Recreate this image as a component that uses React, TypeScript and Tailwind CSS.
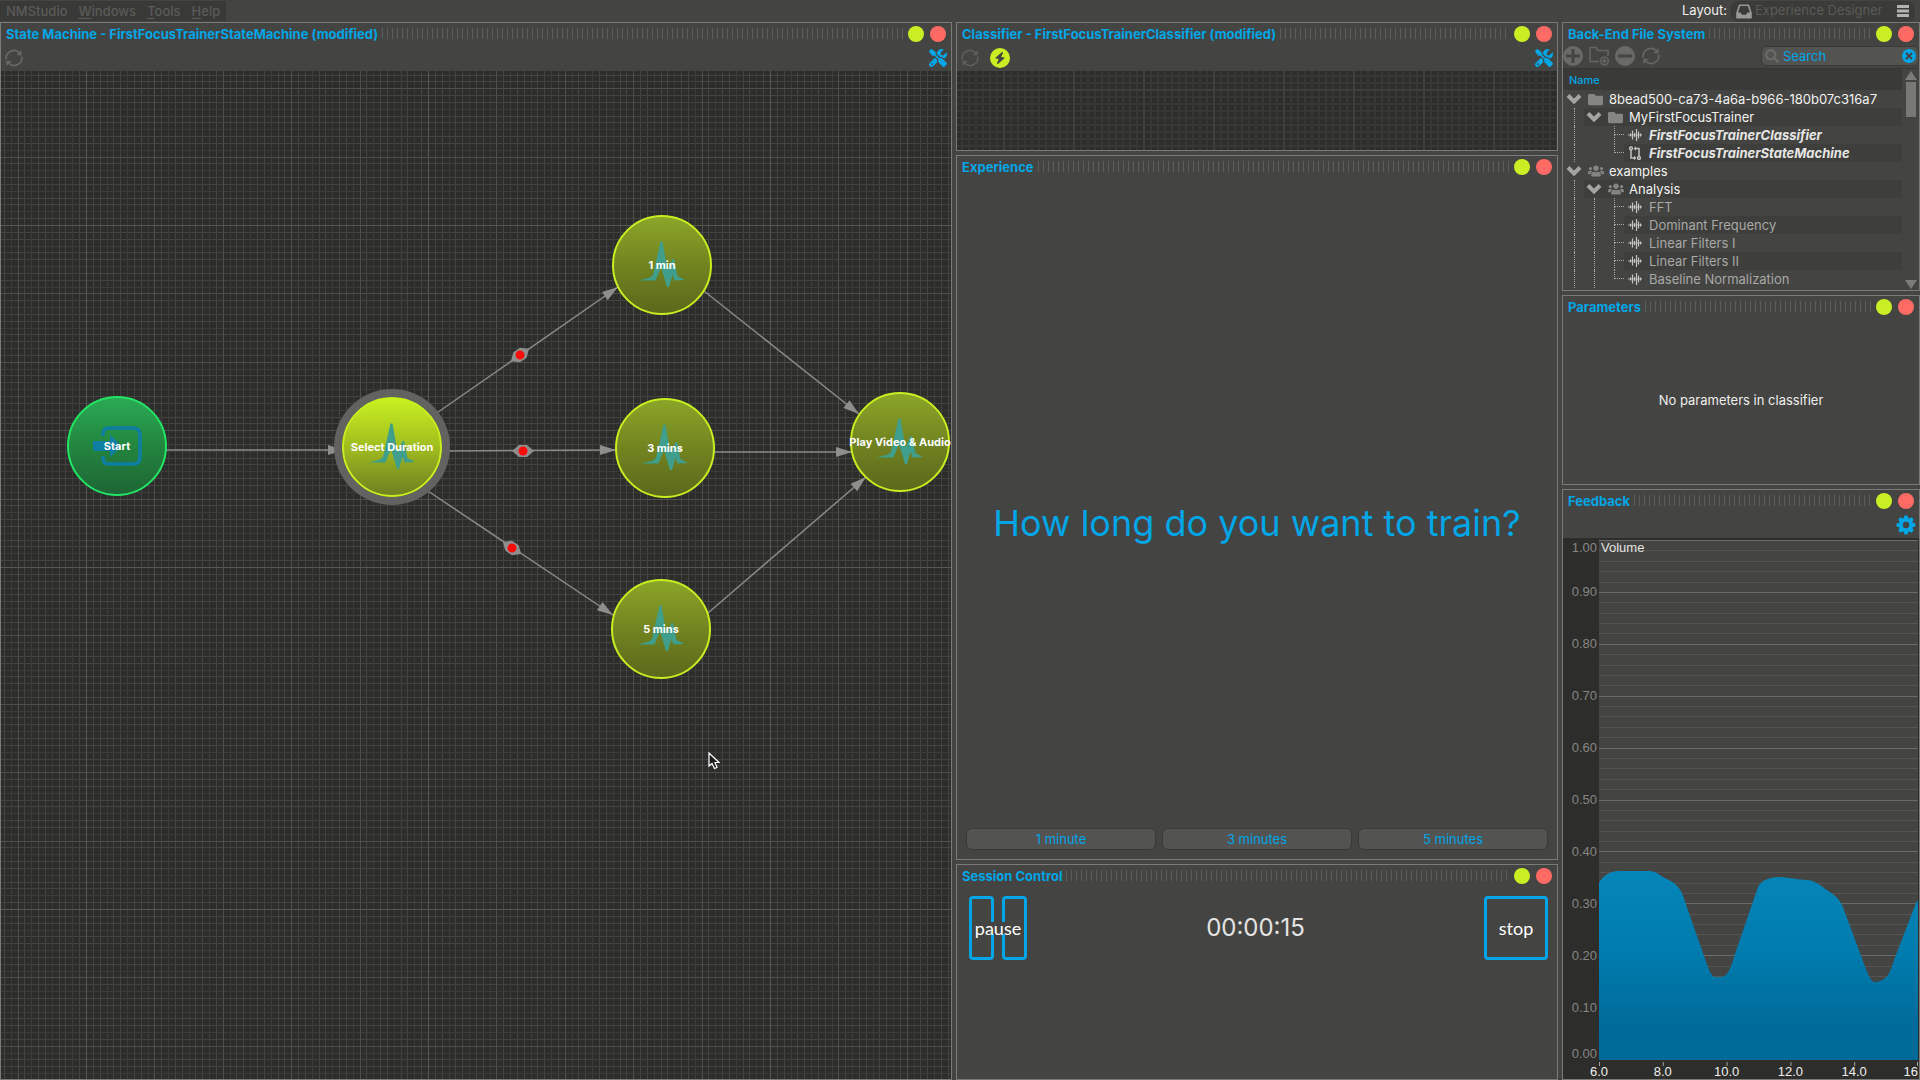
import type { ReactNode } from "react";
import { FaFolder, FaUsers, FaSearch } from "react-icons/fa";
import { FaBolt, FaScrewdriverWrench } from "react-icons/fa6";

function RefreshIcon({ className }: { className: string }) {
  return (
    <svg viewBox="0 0 18 18" className={className} fill="none" stroke="currentColor" strokeWidth="1.6" aria-hidden="true">
      <path d="M1.2 10.5A7.8 7.8 0 0 1 14.2 3.6" />
      <path d="M16.8 7.5A7.8 7.8 0 0 1 3.8 14.4" />
      <path d="M16.6 1v5.2h-5.2z" fill="currentColor" stroke="none" />
      <path d="M1.4 17v-5.2h5.2z" fill="currentColor" stroke="none" />
    </svg>
  );
}

function GearIcon() {
  return (
    <svg viewBox="-10 -10 20 20" className="size-5" aria-hidden="true">
      <circle r="5.2" fill="none" stroke="currentColor" strokeWidth="4" />
      {[0, 45, 90, 135, 180, 225, 270, 315].map((a) => (
        <path key={a} d="M-2.6 -6L-1.5 -9.4H1.5L2.6 -6Z" fill="currentColor" transform={`rotate(${a})`} />
      ))}
    </svg>
  );
}

function TrayIcon() {
  return (
    <svg viewBox="0 0 16 15" className="h-[15px] w-4 shrink-0 text-[#9a9a98]" aria-hidden="true">
      <path d="M3.500 1.200H12.500L15 9V13.800H1V9Z" fill="none" stroke="currentColor" strokeWidth="1.600" strokeLinejoin="round" />
      <path d="M1 8.500H4.500L6 10.800H10L11.500 8.500H15V14H1Z" fill="currentColor" />
    </svg>
  );
}

function WaveIcon() {
  return (
    <svg viewBox="0 0 14 14" className="h-3.5 w-3.5" stroke="currentColor" strokeWidth="1.2" aria-hidden="true">
      <path d="M0 7H14" strokeWidth="0.8" />
      <path d="M2.500 5.500V8.500M4.500 2.500V11.500M6.500 5V9M8.500 1V13M10.500 3.500V10.500M12.500 5.500V8.500" />
    </svg>
  );
}

function MachineIcon() {
  return (
    <svg viewBox="0 0 14 14" className="h-3.5 w-3.5" fill="none" stroke="currentColor" strokeWidth="1.5" aria-hidden="true">
      <circle cx="3" cy="2.5" r="1.4" />
      <circle cx="11" cy="12" r="1.4" />
      <path d="M3 4v8h3.5M11 10.6V2.5H7.5" />
      <path d="M6 9.8v4.4L8.4 12zM8 .3v4.4L5.6 2.5z" fill="currentColor" stroke="none" />
    </svg>
  );
}

function Panel({ title, children }: { title: string; children?: ReactNode }) {
  return (
    <section className="flex min-h-0 min-w-0 flex-col overflow-hidden border border-[#7b7b79] bg-[#444442]">
      <header className="flex h-[21px] shrink-0 items-center gap-1 pr-[5px] pl-[5px]">
        <h2 className="shrink-0 text-[13px] leading-4 font-bold text-[#00a6e6]">{title}</h2>
        <div className="h-[11px] flex-1 bg-[repeating-linear-gradient(90deg,#5d5d5b_0px,#5d5d5b_1px,transparent_1px,transparent_5px)]" />
        <div className="flex shrink-0 gap-1.5 pl-px">
          <button aria-label={`Detach ${title}`} className="size-4 rounded-full bg-[#c9ee24]" />
          <button aria-label={`Close ${title}`} className="size-4 rounded-full bg-[#ff6b64]" />
        </div>
      </header>
      {children}
    </section>
  );
}

const minorSteps = Array.from({ length: 50 }, (_, i) => Math.round((i * 342) / 50));

function MachineGrid() {
  return (
    <svg className="absolute inset-0 h-full w-full" shapeRendering="crispEdges" aria-hidden="true">
      <defs>
        <pattern id="machine-grid" x="85" y="154" width="342" height="342" patternUnits="userSpaceOnUse">
          {minorSteps.map((p, i) => (
            <g key={p} fill={i % 10 === 0 ? "none" : i % 3 === 0 ? "#3b3b39" : "#434341"}>
              <rect x={p} y="0" width="1" height="342" />
              <rect x="0" y={p} width="342" height="1" />
            </g>
          ))}
          {minorSteps.filter((_, i) => i % 10 === 0).map((p) => (
            <g key={p} fill={p === 0 ? "#575755" : "#4e4e4c"}>
              <rect x={p} y="0" width="1" height="342" />
              <rect x="0" y={p} width="342" height="1" />
            </g>
          ))}
        </pattern>
      </defs>
      <rect width="100%" height="100%" fill="url(#machine-grid)" />
    </svg>
  );
}

function ClassifierGrid() {
  return (
    <svg className="h-full w-full" shapeRendering="crispEdges" aria-hidden="true">
      <defs>
        <pattern id="classifier-grid" x="46" y="18" width="70" height="70" patternUnits="userSpaceOnUse">
          {[1, 2, 3, 4, 5, 6, 7, 8, 9].map((i) => (
            <g key={i} fill="#373735">
              <rect x={i * 7} y="0" width="2" height="70" />
              <rect x="0" y={i * 7} width="70" height="2" />
            </g>
          ))}
          <rect width="2" height="70" fill="#3e3e3c" />
          <rect width="70" height="2" fill="#3e3e3c" />
        </pattern>
      </defs>
      <rect width="100%" height="100%" fill="url(#classifier-grid)" />
    </svg>
  );
}

type Edge = { x1: number; y1: number; x2: number; y2: number; mark?: [number, number] };

const edges: Edge[] = [
  { x1: 165, y1: 379, x2: 343, y2: 379 },
  { x1: 430, y1: 346, x2: 617, y2: 216, mark: [519, 284] },
  { x1: 440, y1: 380, x2: 615, y2: 379, mark: [522, 380] },
  { x1: 421, y1: 416, x2: 612, y2: 544, mark: [511, 477] },
  { x1: 703, y1: 220, x2: 858, y2: 343 },
  { x1: 713, y1: 381, x2: 851, y2: 381 },
  { x1: 707, y1: 542, x2: 865, y2: 406 },
];

function Edges() {
  return (
    <svg className="absolute inset-0 h-full w-full" aria-hidden="true">
      {edges.map((e) => {
        const angle = (Math.atan2(e.y2 - e.y1, e.x2 - e.x1) * 180) / Math.PI;
        return (
          <g key={`${e.x2}-${e.y2}`} fill="#8e8e8c">
            <line x1={e.x1} y1={e.y1} x2={e.x2} y2={e.y2} stroke="#8a8a88" strokeWidth="1.5" />
            <path d="M0 0L-16 -5V5Z" transform={`translate(${e.x2} ${e.y2}) rotate(${angle})`} />
            {e.mark && (
              <g transform={`translate(${e.mark[0]} ${e.mark[1]}) rotate(${angle})`}>
                <path d="M-11 0L-4 -6H4L11 0L4 6H-4Z" />
                <circle r="4.5" fill="#ff0a0a" />
              </g>
            )}
          </g>
        );
      })}
    </svg>
  );
}

function Pulse() {
  return (
    <svg viewBox="-24 -24 48 48" className="size-12" aria-hidden="true">
      <path
        d="M-23 15.500L-12 12.500L-9 10L-1.500 -23.500L0.500 -23.500L5.500 5L10.500 -6L12 -6L15.500 11L23 15L12.500 15.500L10.500 10L7 22L5 22L-1 2L-6.500 15.500Z"
        fill="#3f9e8c"
      />
    </svg>
  );
}

function Enter() {
  return (
    <svg viewBox="-26 -24 52 48" className="h-12 w-13" fill="none" stroke="#0e7ea2" strokeWidth="3.500" aria-hidden="true">
      <path d="M-14 -10V-12Q-14 -18 -8 -18H16Q23 -18 23 -11V11Q23 18 16 18H-8Q-14 18 -14 12V10" />
      <path d="M-24 -5H-7V-11L5 0L-7 11V5H-24Z" fill="#0e7ea2" stroke="none" />
    </svg>
  );
}

type NodeInfo = { label: string; place: string; look: string; kind: "start" | "pulse" };

const idle = "border-[#c6ee20] bg-linear-to-b from-[#8ba528] via-[#728420] to-[#5c681c]";

const nodes: NodeInfo[] = [
  { label: "Start", place: "left-[66px] top-[325px]", look: "border-[#22e465] bg-linear-to-b from-[#2aaa55] via-[#23853f] to-[#1e6535]", kind: "start" },
  {
    label: "Select Duration",
    place: "left-[341px] top-[326px]",
    look: "border-[#c6ee20] bg-linear-to-b from-[#c9f022] via-[#a0bd1e] to-[#6f7f20] ring-8 ring-[#626260]",
    kind: "pulse",
  },
  { label: "1 min", place: "left-[611px] top-[144px]", look: idle, kind: "pulse" },
  { label: "3 mins", place: "left-[614px] top-[327px]", look: idle, kind: "pulse" },
  { label: "5 mins", place: "left-[610px] top-[508px]", look: idle, kind: "pulse" },
  { label: "Play Video & Audio", place: "left-[849px] top-[321px]", look: idle, kind: "pulse" },
];

function StateNode({ node }: { node: NodeInfo }) {
  return (
    <div className={`absolute grid size-[100px] grid-cols-1 place-items-center rounded-full border-2 ${node.place} ${node.look}`}>
      <div className="col-start-1 row-start-1">{node.kind === "start" ? <Enter /> : <Pulse />}</div>
      <span className="z-10 col-start-1 row-start-1 text-[11px] leading-4 font-bold whitespace-nowrap text-white">
        {node.label}
      </span>
    </div>
  );
}

function Chevron() {
  return (
    <svg viewBox="0 0 16 12" className="h-3 w-4 text-[#a5a5a3]" fill="none" stroke="currentColor" strokeWidth="4" aria-hidden="true">
      <path d="M2 2.500L8 8.500L14 2.500" />
    </svg>
  );
}

type Row = { label: string; depth: 0 | 1 | 2; icon: "folder" | "users" | "wave" | "machine"; tone: string; outer?: boolean; last?: boolean };

const leafTone = "text-[#a8a8a6]";
const openTone = "font-bold italic text-[#e6e6e4]";
const rows: Row[] = [
  { label: "8bead500-ca73-4a6a-b966-180b07c316a7", depth: 0, icon: "folder", tone: "text-[#f2f2f0]" },
  { label: "MyFirstFocusTrainer", depth: 1, icon: "folder", tone: "text-[#f2f2f0]" },
  { label: "FirstFocusTrainerClassifier", depth: 2, icon: "wave", tone: openTone },
  { label: "FirstFocusTrainerStateMachine", depth: 2, icon: "machine", tone: openTone, last: true },
  { label: "examples", depth: 0, icon: "users", tone: "text-[#f2f2f0]" },
  { label: "Analysis", depth: 1, icon: "users", tone: "text-[#f2f2f0]" },
  { label: "FFT", depth: 2, icon: "wave", tone: leafTone, outer: true },
  { label: "Dominant Frequency", depth: 2, icon: "wave", tone: leafTone, outer: true },
  { label: "Linear Filters I", depth: 2, icon: "wave", tone: leafTone, outer: true },
  { label: "Linear Filters II", depth: 2, icon: "wave", tone: leafTone, outer: true },
  { label: "Baseline Normalization", depth: 2, icon: "wave", tone: leafTone, outer: true, last: true },
];

function Guide({ shown }: { shown: boolean }) {
  return (
    <span className="flex w-5 shrink-0 justify-center self-stretch">
      {shown && <span className="border-l border-dotted border-[#a8a8a6]" />}
    </span>
  );
}

function TreeRow({ row, shaded }: { row: Row; shaded: boolean }) {
  return (
    <li className="flex h-[18px] items-center pl-px">
      {row.depth > 0 && <Guide shown />}
      {row.depth > 1 && <Guide shown={!!row.outer} />}
      {row.depth > 1 && (
        <span className="flex h-full w-5 shrink-0 justify-end">
          <span className="flex w-2.5 flex-col">
            <span className="h-[9px] border-b border-l border-dotted border-[#a8a8a6]" />
            {!row.last && <span className="h-[9px] border-l border-dotted border-[#a8a8a6]" />}
          </span>
        </span>
      )}
      <span className={`flex h-full min-w-0 flex-1 items-center ${shaded ? "bg-[#3e3e3c]" : ""}`}>
        {row.depth < 2 && (
          <button aria-label={`Collapse ${row.label}`} className="flex w-5 shrink-0 justify-center">
            <Chevron />
          </button>
        )}
        <span className={`flex w-[25px] shrink-0 items-center pl-[4px] ${row.depth < 2 ? "text-[#858583]" : "text-[#c4c4c2]"}`}>
          {row.icon === "folder" && <FaFolder className="size-[15px]" />}
          {row.icon === "users" && <FaUsers className="size-4" />}
          {row.icon === "wave" && <WaveIcon />}
          {row.icon === "machine" && <MachineIcon />}
        </span>
        <span className={`whitespace-nowrap text-[13px] leading-[18px] ${row.tone}`}>{row.label}</span>
      </span>
    </li>
  );
}

function FileSystem() {
  return (
    <>
      <div className="flex h-6 shrink-0 items-center gap-1.5 text-[#666664]">
        <button aria-label="Add" className="grid size-5 place-items-center rounded-full bg-[#696967]">
          <svg viewBox="0 0 14 14" className="size-3.5" stroke="#444442" strokeWidth="3" aria-hidden="true"><path d="M7 0V14M0 7H14" /></svg>
        </button>
        <button aria-label="New folder">
          <svg viewBox="0 0 20 20" className="size-5" fill="none" stroke="currentColor" strokeWidth="1.500" aria-hidden="true">
            <path d="M10 15.500H1V1.500H7L9 4.500H19V10" />
            <circle cx="15.500" cy="15" r="3.800" />
            <path d="M15.500 12.800V17.200M13.300 15H17.700" />
          </svg>
        </button>
        <button aria-label="Remove" className="grid size-5 place-items-center rounded-full bg-[#696967]">
          <svg viewBox="0 0 14 14" className="size-3.5" stroke="#444442" strokeWidth="3" aria-hidden="true"><path d="M0 7H14" /></svg>
        </button>
        <button aria-label="Refresh files" className="px-px"><RefreshIcon className="size-[18px]" /></button>
        <label className="ml-auto flex h-5 w-[158px] items-center gap-1 rounded-md border border-[#3a3a38] bg-[#535351] pr-0.5 pl-[3px]">
          <FaSearch className="size-3.5 shrink-0 text-[#6a6a68]" />
          <input type="text" aria-label="Search files" placeholder="Search" className="min-w-0 flex-1 bg-transparent text-[13px] leading-4 outline-none placeholder:text-[#00a6e6]" />
          <button aria-label="Clear search" className="grid size-3.5 shrink-0 place-items-center rounded-full bg-[#00a6e6]">
            <svg viewBox="0 0 8 8" className="size-2" stroke="#444442" strokeWidth="2" aria-hidden="true"><path d="M1 1L7 7M7 1L1 7" /></svg>
          </button>
        </label>
      </div>
      <div className="flex min-h-0 flex-1 overflow-hidden border-t border-[#363634]">
        <div className="flex min-w-0 flex-1 flex-col overflow-hidden">
          <h3 className="h-[21px] shrink-0 bg-[#3a3a38] pl-1.5 text-[11px] leading-[22px] font-medium text-[#00a6e6]">Name</h3>
          <ul>
            {rows.map((row, i) => (
              <TreeRow key={row.label} row={row} shaded={i % 2 === 1} />
            ))}
          </ul>
        </div>
        <div className="flex w-[17px] shrink-0 flex-col items-center pt-0.5">
          <svg viewBox="0 0 12 9" className="h-[9px] w-3" aria-hidden="true"><path d="M6 0L12 9H0Z" fill="#7c7c7a" /></svg>
          <div className="mt-0.5 h-[35px] w-2.5 bg-[#787876]" />
          <svg viewBox="0 0 12 9" className="mt-auto mb-px h-[9px] w-3" aria-hidden="true"><path d="M6 9L12 0H0Z" fill="#7c7c7a" /></svg>
        </div>
      </div>
    </>
  );
}

const volumeArea =
  "M0 520V343C3 337 10 331 20 331H50C58 331 62 337 68 339C76 343 81 347 84 356L104 413C110 430 112 437 117 437C128 438 130 434 136 414L158 350C160 342 168 337 181 337C190 337 198 340 208 340C218 341 223 347 228 350C238 357 241 359 245 370L261 413C269 435 272 443 277 442C288 440 291 434 295 420L317 363L319 360V520Z";

function VolumeChart() {
  const levels = Array.from({ length: 51 }, (_, i) => i);
  const ticks = ["6.0", "8.0", "10.0", "12.0", "14.0"];
  return (
    <div className="grid min-h-0 flex-1 grid-cols-[36px_1fr] grid-rows-[1fr_19px] overflow-hidden bg-[#2d2d2b] pt-0.5 font-['Liberation_Sans',Arial,sans-serif] text-[13px]">
      <svg className="h-full w-full" fill="#868684" role="img" aria-label="Volume scale">
        {Array.from({ length: 11 }, (_, i) => (
          <text key={i} x="34" y={`${i * 10}%`} dy={i === 0 ? 12 : i === 10 ? -2 : 4} textAnchor="end">
            {(1 - i / 10).toFixed(2)}
          </text>
        ))}
      </svg>
      <div className="relative mr-px min-h-0 bg-[#444442]">
        <svg viewBox="0 0 319 520" preserveAspectRatio="none" className="absolute inset-0 h-full w-full" role="img" aria-label="Volume over time">
          <defs>
            <linearGradient id="volume-fill" x1="0" y1="0" x2="0" y2="1">
              <stop offset="0" stopColor="#0586b8" />
              <stop offset="0.450" stopColor="#007bad" />
              <stop offset="0.800" stopColor="#006c9b" />
              <stop offset="1" stopColor="#006a98" />
            </linearGradient>
          </defs>
          {levels.map((i) => (
            <rect key={i} x="0" y={Math.round(i * 10.38)} width="319" height="1" fill={i % 5 === 0 ? "#6a6a68" : "#545452"} />
          ))}
          <path d={volumeArea} fill="url(#volume-fill)" />
        </svg>
        <p className="relative pl-0.5 leading-4 text-[#e4e4e2]">Volume</p>
      </div>
      <svg className="col-span-2 h-full w-full" fill="#f0f0ee" role="img" aria-label="Time scale">
        <svg x="36" width="319" height="19" overflow="visible">
          {ticks.map((t, i) => (
            <g key={t}>
              <rect x={`${i * 20}%`} y="2" width="1" height="4" fill="#a0a09e" />
              <text x={`${i * 20}%`} y="16" textAnchor="middle">{t}</text>
            </g>
          ))}
          <rect x="318" y="2" width="1" height="4" fill="#a0a09e" />
          <text x="319" y="16" textAnchor="end">16</text>
        </svg>
      </svg>
    </div>
  );
}

export default function App() {
  return (
    <div className="flex h-screen flex-col overflow-hidden bg-[#444442] font-['Inter','Liberation_Sans',sans-serif] text-[13px] text-white">
      <div className="flex h-[22px] shrink-0 items-start justify-between">
        <nav className="mt-px flex h-5 items-center gap-[11px] bg-[#393937] px-1.5 text-[13px] leading-5 font-medium text-[#5b5b59]">
          <button>NMStudio</button>
          <button><u className="underline-offset-2">W</u>indows</button>
          <button><u className="underline-offset-2">T</u>ools</button>
          <button><u className="underline-offset-2">H</u>elp</button>
        </nav>
        <div className="flex h-[22px] items-center gap-1 pr-[5px]">
          <label htmlFor="layout" className="text-[13px] text-[#f0f0ee]">Layout:</label>
          <div className="flex h-[21px] w-[184px] items-center gap-[3px] rounded-lg bg-[#3b3b39] pr-1.5 pl-[5px]">
            <TrayIcon />
            <select id="layout" className="min-w-0 flex-1 appearance-none bg-transparent text-[13px] text-[#5a5a58] outline-none">
              <option>Experience Designer</option>
            </select>
            <svg viewBox="0 0 12 12" className="size-3 shrink-0" fill="#b4b4b2" aria-hidden="true">
              <path d="M0 0H12V3H0ZM0 4.500H12V7.500H0ZM0 9H12V12H0Z" />
            </svg>
          </div>
        </div>
      </div>

      <main className="grid min-h-0 flex-1 grid-cols-[952fr_602fr_358fr] gap-1">
        <Panel title="State Machine - FirstFocusTrainerStateMachine (modified)">
          <div className="flex h-[27px] shrink-0 items-center justify-between px-1">
            <button aria-label="Reload state machine"><RefreshIcon className="size-[18px] text-[#686866]" /></button>
            <button aria-label="State machine tools"><FaScrewdriverWrench className="size-[18px] text-[#00a6e6]" /></button>
          </div>
          <div className="relative min-h-0 flex-1 overflow-hidden bg-[#2d2d2b]">
            <MachineGrid />
            <Edges />
            {nodes.map((n) => (
              <StateNode key={n.label} node={n} />
            ))}
            <svg viewBox="0 0 12 18" className="absolute top-[681px] left-[707px] h-[18px] w-3" aria-hidden="true">
              <path d="M1 1V14L4 11.500L6.500 16.500L9 15.500L7 10.500H11Z" fill="#1c1c1c" stroke="#fff" strokeWidth="1.200" />
            </svg>
          </div>
        </Panel>

        <div className="grid min-h-0 min-w-0 grid-rows-[129fr_705fr_216fr] gap-1">
          <Panel title="Classifier - FirstFocusTrainerClassifier (modified)">
            <div className="flex h-[27px] shrink-0 items-center gap-[11px] px-1">
              <button aria-label="Reload classifier"><RefreshIcon className="size-[18px] text-[#5e5e5c]" /></button>
              <button aria-label="Run classifier" className="grid size-5 place-items-center rounded-full bg-[#c9ee24] text-[#444442]">
                <FaBolt className="size-3" />
              </button>
              <button aria-label="Classifier tools" className="ml-auto"><FaScrewdriverWrench className="size-[18px] text-[#00a6e6]" /></button>
            </div>
            <div className="min-h-0 flex-1 overflow-hidden bg-[#2d2d2b]"><ClassifierGrid /></div>
          </Panel>

          <Panel title="Experience">
            <p className="flex min-h-0 flex-1 items-center justify-center pt-10 text-[36px] text-[#00a6e6]">How long do you want to train?</p>
            <div className="flex shrink-0 gap-1.5 px-[9px] pb-[9px]">
              {["1 minute", "3 minutes", "5 minutes"].map((t) => (
                <button key={t} className="h-[22px] flex-1 rounded-md border border-[#3a3a38] bg-[#535351] text-[13px] leading-5 text-[#00a6e6]">{t}</button>
              ))}
            </div>
          </Panel>

          <Panel title="Session Control">
            <div className="flex items-center justify-between pt-2.5 pr-[9px] pl-3">
              <button className="grid h-16 w-[58px] place-items-center font-['Lato',sans-serif] text-[18px]">
                <span className="col-start-1 row-start-1 flex h-16 w-full justify-between">
                  <span className="w-[25px] rounded-sm border-3 border-[#00a6e6]" />
                  <span className="w-[25px] rounded-sm border-3 border-[#00a6e6]" />
                </span>
                <span className="z-10 col-start-1 row-start-1 bg-[#444442] leading-3">pause</span>
              </button>
              <time className="text-[24px] text-[#e4e4e2]">00:00:15</time>
              <button className="h-16 w-16 rounded-sm border-3 border-[#00a6e6] font-['Lato',sans-serif] text-[18px] leading-5">stop</button>
            </div>
          </Panel>
        </div>

        <div className="grid min-h-0 min-w-0 grid-rows-[269fr_190fr_591fr] gap-1">
          <Panel title="Back-End File System">
            <FileSystem />
          </Panel>
          <Panel title="Parameters">
            <p className="flex flex-1 items-center justify-center text-[13px] text-[#eeeeec]">No parameters in classifier</p>
          </Panel>
          <Panel title="Feedback">
            <div className="flex h-[27px] shrink-0 items-center justify-end px-[3px] text-[#00a6e6]">
              <button aria-label="Feedback settings"><GearIcon /></button>
            </div>
            <VolumeChart />
          </Panel>
        </div>
      </main>
    </div>
  );
}
